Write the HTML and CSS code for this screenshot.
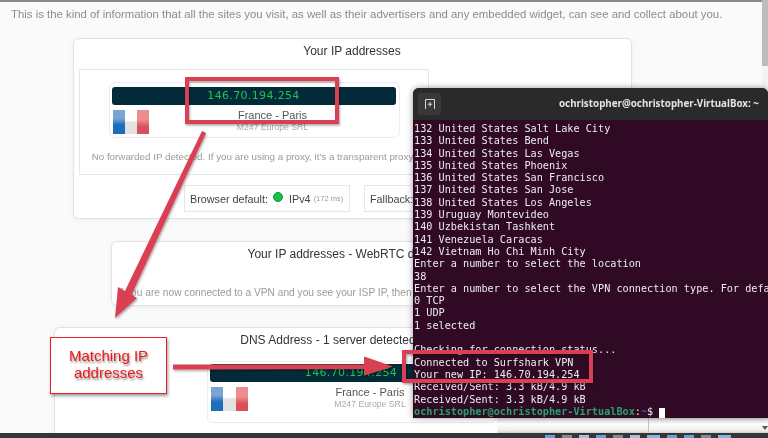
FILE: index.html
```html
<!DOCTYPE html>
<html lang="en">
<head>
<meta charset="utf-8">
<title>IP leak test with VPN</title>
<link rel="stylesheet" href="styles.css">
</head>
<body>
<div class="screen">
  <main class="page">
    <p class="intro">This is the kind of information that all the sites you visit, as well as their advertisers and any embedded widget, can see and collect about you.</p>

    <section class="card card-ip">
      <h2 class="card-title">Your IP addresses</h2>
      <div class="inner">
        <div class="ip-box">
          <div class="ip-bar">146.70.194.254</div>
          <div class="geo">
            <div class="flag"><i class="blue"></i><i class="white"></i><i class="red"></i></div>
            <div class="geo-text"><div class="city">France - Paris</div><div class="isp">M247 Europe SRL</div></div>
          </div>
        </div>
        <p class="note">No forwarded IP detected. If you are using a proxy, it's a transparent proxy.</p>
      </div>
      <div class="pills">
        <div class="pill pill-a">Browser default: <span class="dot"></span> IPv4 <small>(172 ms)</small></div>
        <div class="pill pill-b">Fallback:</div>
      </div>
    </section>

    <section class="card card-rtc">
      <h2 class="card-title">Your IP addresses - WebRTC detection</h2>
      <p class="note note-rtc">If you are now connected to a VPN and you see your ISP IP, then your system is leaking</p>
    </section>

    <section class="card card-dns">
      <h2 class="card-title">DNS Address - 1 server detected, 0 errors</h2>
      <div class="ip-box ip-box-dns">
        <div class="ip-bar">146.70.194.254</div>
        <div class="geo">
          <div class="flag"><i class="blue"></i><i class="white"></i><i class="red"></i></div>
          <div class="geo-text"><div class="city">France - Paris</div><div class="isp">M247 Europe SRL</div></div>
        </div>
      </div>
    </section>
  </main>

  <div class="scrollbar"><div class="thumb"></div></div>

  <footer class="bottom">
    <div class="status"><span class="status-cell"></span><span class="status-arrow"></span></div>
    <div class="taskbar">
      <span class="tray t1"></span><span class="tray t2"></span><span class="tray t3"></span><span class="tray t1"></span><span class="tray t2"></span><span class="tray t3"></span><span class="tray t4"></span><span class="tray t1"></span><span class="tray t1"></span><span class="tray t2"></span><span class="tray t4"></span>
    </div>
  </footer>

  <section class="terminal">
    <header class="term-head">
      <span class="term-tab"><svg width="14" height="14" viewBox="0 0 14 14" fill="none" stroke="#d8d8d8" stroke-width="1"><path d="M2.500 12V2.500H11.500V12"/><path d="M7 5V9.500M4.800 7.200H9.200"/></svg></span>
      <span class="term-title">ochristopher@ochristopher-VirtualBox: ~</span>
    </header>
<pre class="term-body">132 United States Salt Lake City
133 United States Bend
134 United States Las Vegas
135 United States Phoenix
136 United States San Francisco
137 United States San Jose
138 United States Los Angeles
139 Uruguay Montevideo
140 Uzbekistan Tashkent
141 Venezuela Caracas
142 Vietnam Ho Chi Minh City
Enter a number to select the location
38
Enter a number to select the VPN connection type. For defa
0 TCP
1 UDP
1 selected

Checking for connection status...
Connected to Surfshark VPN
Your new IP: 146.70.194.254
Received/Sent: 3.3 kB/4.9 kB
Received/Sent: 3.3 kB/4.9 kB
<span class="prompt">ochristopher@ochristopher-VirtualBox</span>:<span class="tilde">~</span>$ <span class="cursor"> </span></pre>
  </section>

  <svg class="marks" width="768" height="438" viewBox="0 0 768 438">
    <defs>
      <filter id="sh" x="-10%" y="-10%" width="120%" height="120%"><feDropShadow dx="1" dy="1.500" stdDeviation="1.200" flood-color="#000" flood-opacity=".35"/></filter>
    </defs>
    <g filter="url(#sh)" fill="none" stroke="#d94152" stroke-width="4">
      <rect x="187" y="79" width="150" height="43"/>
      <rect x="404" y="352" width="187" height="29"/>
    </g>
    <g filter="url(#sh)" fill="#d94152">
      <path d="M202 131L206 133L131 296L124 293Z"/>
      <path d="M115 318L118 287L137 298Z"/>
      <path d="M173 364.500L366 364.500V369L173 369.500Z"/>
      <path d="M393 366.500L364 356.500V375.500Z"/>
    </g>
  </svg>

  <div class="callout">Matching IP<br>addresses</div>
</div>
</body>
</html>
```
FILE: styles.css
```css
* { box-sizing: border-box; }
html, body { margin: 0; padding: 0; }
body { width: 768px; height: 438px; overflow: hidden; font-family: "Liberation Sans", Arial, sans-serif; }

.screen { position: relative; width: 768px; height: 438px; overflow: hidden; background: #fafafa; filter: blur(.35px); }

.page { display: flex; flex-direction: column; align-items: center; border-top: 2px solid #8b8b8b; width: 762px; height: 433px; overflow: hidden; padding-right: 58px; }
.intro { margin: 6px 0 0; width: 704px; padding-left: 11px; font-size: 11.38px; line-height: 13px; color: #8c8c8c; white-space: nowrap; }

.card { flex: none; background: #fff; border: 1px solid #e2e2e2; border-radius: 6px; box-shadow: 0 1px 6px rgba(0,0,0,.05); display: flex; flex-direction: column; }
.card-title { margin: 0; font-size: 12px; line-height: 15px; font-weight: 400; color: #333; text-align: center; white-space: nowrap; }

.card-ip { margin-top: 17px; width: 559px; height: 181px; padding: 5px 5px 0; }
.card-rtc { margin-top: 22px; width: 483px; height: 65px; padding: 5px 5px 0; }
.card-dns { margin-top: 21px; width: 596px; height: 130px; padding: 5px 5px 0; align-items: flex-start; }
.card-dns .card-title { width: 100%; }

.inner { margin-top: 10px; width: 350px; height: 106px; border: 1px solid #e6e6e6; display: flex; flex-direction: column; align-items: center; padding-top: 12px; }
.ip-box { width: 291px; height: 56px; margin-left: 1px; border: 1px solid #ececec; border-radius: 6px; padding: 4px 3px 3px 2px; background: #fff; }
.ip-box-dns { margin: 13px 0 0 147px; width: 289px; height: 62px; padding-top: 2px; }
.ip-bar { height: 18px; border-radius: 3px; background: #032a38; color: #1ec44f; font-family: "DejaVu Sans", sans-serif; font-size: 11px; line-height: 18px; text-align: center; letter-spacing: .35px; }

.geo { display: flex; margin-top: 5px; }
.flag { width: 37px; height: 24px; flex: none; display: flex; margin-left: 1px; }
.flag i { flex: 1; display: block; }
.blue { background: linear-gradient(#7aa5d2 0 35%, #1e6dbb 62%); }
.white { background: linear-gradient(#fff 0 42%, #e2e2e2 52%); }
.red { background: linear-gradient(#ee8d8f 0 40%, #d9505a 70%); }
.geo-text { flex: 1; text-align: center; }
.city { font-size: 11px; line-height: 14px; color: #555; margin-top: -2px; }
.isp { font-size: 8.7px; line-height: 11px; color: #aaa; }

.note { margin: 0; font-size: 9.8px; line-height: 13px; color: #9a9a9a; white-space: nowrap; }
.inner .note { margin-top: 12px; }
.note-rtc { margin: 24px 0 0; font-size: 10.2px; padding-left: 1px; }

.pills { display: flex; justify-content: center; gap: 14px; margin-top: 10px; }
.pill { height: 27px; border: 1px solid #e6e6e6; background: #fff; display: flex; align-items: center; font-size: 10.8px; color: #444; white-space: pre; padding: 0 5px; }
.pill-a { width: 166px; }
.pill-b { width: 156px; }
.pill small { font-size: 7.5px; color: #999; }
.dot { flex: none; width: 10px; height: 10px; border-radius: 50%; background: #13c24a; border: 1px solid #0e8f38; margin: -3px 3px 0 2px; }

.scrollbar { position: absolute; top: 0; right: 0; width: 6px; height: 433px; background: #f3f3f3; }
.thumb { height: 66px; background: #bcbcbc; }

.terminal { position: absolute; left: 413px; top: 88px; width: 355px; height: 330px; background: #300a24; border-radius: 6px 6px 0 0; overflow: hidden; box-shadow: 0 0 6px rgba(0,0,0,.4); }
.term-head { height: 32px; background: #2a2a2a; display: flex; align-items: center; position: relative; }
.term-tab { width: 23px; height: 22px; margin-left: 5px; background: #383838; border-radius: 3px; display: flex; align-items: center; justify-content: center; }
.term-title { position: absolute; left: 146px; top: 9px; font-family: "Noto Sans", sans-serif; font-size: 9.8px; line-height: 13px; font-weight: 700; color: #e4e4e4; white-space: nowrap; }
.term-body { margin: 0; padding: 3px 0 0 1px; font-family: "DejaVu Sans Mono", monospace; font-size: 10.2px; line-height: 12.3px; color: #ececec; white-space: pre; }
.prompt { color: #26a269; font-weight: 700; }
.tilde { color: #3465a4; font-weight: 700; }
.cursor { display: inline-block; width: 6px; height: 12px; background: #fff; vertical-align: -2px; }

.bottom { position: absolute; left: 0; right: 0; bottom: 0; }
.status { position: absolute; left: 497px; right: 0; bottom: 5px; height: 15px; background: linear-gradient(#e0e0e0, #fff 40%, #ececec 85%, #cfcfcf); display: flex; }
.status-cell { width: 152px; border-right: 1px solid #c4c4c4; }
.status-arrow { position: absolute; right: 0; top: 8px; border: 3px solid transparent; border-top: 4px solid #555; }
.taskbar { height: 5px; background: #33363a; display: flex; align-items: flex-end; padding-left: 545px; gap: 7px; overflow: hidden; }
.tray { flex: none; display: block; width: 10px; height: 3px; }
.t1 { background: #6f9fd0; }
.t2 { background: #8a8a8a; }
.t3 { background: #a8bfd6; }
.t4 { background: #8cb4d8; width: 13px; }

.marks { position: absolute; left: 0; top: 0; }
.callout { position: absolute; left: 50px; top: 337px; width: 117px; height: 57px; border: 1.5px solid #f02020; background: #fff; box-shadow: 1px 2px 3px rgba(0,0,0,.4); color: #f01818; font-size: 15px; line-height: 17.5px; text-align: center; padding-top: 8.5px; text-shadow: 1px 1.5px 2px rgba(0,0,0,.45); }
```
